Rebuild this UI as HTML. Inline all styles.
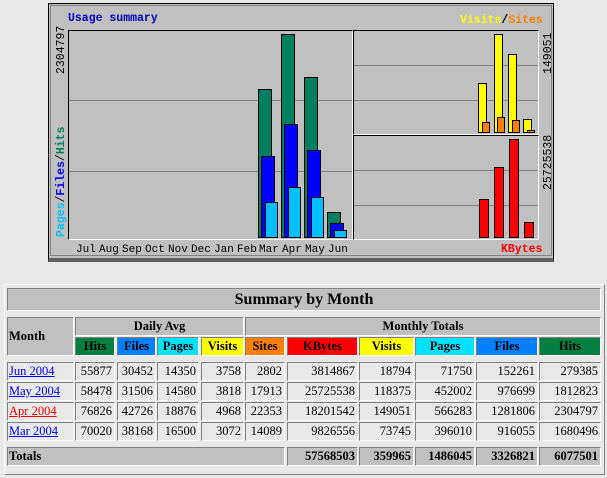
<!DOCTYPE html>
<html><head><meta charset="utf-8"><style>
body{margin:0;width:607px;height:478px;background:#e8e8e8;position:relative;overflow:hidden;font-family:"Liberation Serif",serif}
div{position:absolute;box-sizing:border-box}
.g{font-family:"Liberation Mono",monospace;font-weight:bold;font-size:11.5px;line-height:11px;white-space:nowrap}
.m{font-family:"Liberation Mono",monospace;font-size:11px;line-height:11px;top:245px;color:#000}
.b{border:1px solid #000}
.p{border-top:1px solid #000;border-left:1px solid #000;border-bottom:1px solid #fff;border-right:1px solid #fff;background:#c0c0c0}
.gl{height:1px;background:#808080}
.c{border:1px solid;border-color:#808080 #fff #fff #808080;font-size:12.5px;line-height:16px;text-align:right;padding-right:2px;background:#e8e8e8;white-space:nowrap}
.h{border:1px solid;border-color:#808080 #fff #fff #808080;font-size:12.5px;font-weight:bold;line-height:16px;text-align:center;background:#c0c0c0;white-space:nowrap}
.r{transform:rotate(-90deg);transform-origin:0 0}
a{color:#00f}
</style></head><body>
<div style="left:48px;top:3px;width:506px;height:259px;background:#c0c0c0;border:1px solid #000;border-bottom:4px solid #606060"></div>
<div style="left:50px;top:5px;width:502px;height:251px;border:1px solid #808080"></div>
<div class="g" style="left:68px;top:13px;color:#0000c0">Usage summary</div>
<div class="g" style="left:460px;top:15px;color:#ffff00">Visits<span style="color:#000">/</span><span style="color:#ff8000">Sites</span></div>
<div class="g" style="left:501px;top:244px;color:#ff0000">KBytes</div>
<div class="p" style="left:68px;top:30px;width:285px;height:210px"></div>
<div class="gl" style="left:69px;top:100px;width:283px"></div>
<div class="gl" style="left:69px;top:171px;width:283px"></div>
<div class="g r" style="left:56px;top:74px;font-weight:normal;color:#000">2304797</div>
<div class="g r" style="left:56px;top:237px;font-weight:normal"><span style="color:#00c0ff;font-weight:bold">Pages</span>/<span style="color:#0000ff;font-weight:bold">Files</span>/<span style="color:#008060;font-weight:bold">Hits</span></div>
<div class="m" style="left:76px">Jul</div>
<div class="m" style="left:99px">Aug</div>
<div class="m" style="left:122px">Sep</div>
<div class="m" style="left:145px">Oct</div>
<div class="m" style="left:168px">Nov</div>
<div class="m" style="left:191px">Dec</div>
<div class="m" style="left:214px">Jan</div>
<div class="m" style="left:237px">Feb</div>
<div class="m" style="left:259px">Mar</div>
<div class="m" style="left:282px">Apr</div>
<div class="m" style="left:305px">May</div>
<div class="m" style="left:328px">Jun</div>
<div class="b" style="left:258px;top:89px;width:14px;height:149px;background:#008060"></div>
<div class="b" style="left:261px;top:156px;width:14px;height:82px;background:#0000ff"></div>
<div class="b" style="left:265px;top:202px;width:13px;height:36px;background:#00c0ff"></div>
<div class="b" style="left:281px;top:34px;width:14px;height:204px;background:#008060"></div>
<div class="b" style="left:284px;top:124px;width:14px;height:114px;background:#0000ff"></div>
<div class="b" style="left:288px;top:187px;width:13px;height:51px;background:#00c0ff"></div>
<div class="b" style="left:304px;top:77px;width:14px;height:161px;background:#008060"></div>
<div class="b" style="left:307px;top:150px;width:14px;height:88px;background:#0000ff"></div>
<div class="b" style="left:311px;top:197px;width:13px;height:41px;background:#00c0ff"></div>
<div class="b" style="left:327px;top:212px;width:14px;height:26px;background:#008060"></div>
<div class="b" style="left:330px;top:223px;width:14px;height:15px;background:#0000ff"></div>
<div class="b" style="left:334px;top:230px;width:13px;height:8px;background:#00c0ff"></div>
<div class="p" style="left:353px;top:30px;width:186px;height:105px"></div>
<div class="gl" style="left:354px;top:65px;width:184px"></div>
<div class="gl" style="left:354px;top:100px;width:184px"></div>
<div class="p" style="left:353px;top:135px;width:186px;height:105px"></div>
<div class="gl" style="left:354px;top:170px;width:184px"></div>
<div class="gl" style="left:354px;top:205px;width:184px"></div>
<div class="g r" style="left:543px;top:74px;font-weight:normal">149051</div>
<div class="g r" style="left:543px;top:190px;font-weight:normal">25725538</div>
<div class="b" style="left:478px;top:83px;width:9px;height:50px;background:#ffff00"></div>
<div class="b" style="left:482px;top:122px;width:8px;height:11px;background:#ff8000"></div>
<div class="b" style="left:494px;top:34px;width:9px;height:99px;background:#ffff00"></div>
<div class="b" style="left:497px;top:117px;width:8px;height:16px;background:#ff8000"></div>
<div class="b" style="left:508px;top:54px;width:9px;height:79px;background:#ffff00"></div>
<div class="b" style="left:512px;top:120px;width:8px;height:13px;background:#ff8000"></div>
<div class="b" style="left:523px;top:119px;width:9px;height:14px;background:#ffff00"></div>
<div class="b" style="left:527px;top:130px;width:8px;height:3px;background:#ff8000"></div>
<div class="b" style="left:479px;top:199px;width:10px;height:39px;background:#ff0000"></div>
<div class="b" style="left:494px;top:167px;width:10px;height:71px;background:#ff0000"></div>
<div class="b" style="left:509px;top:139px;width:10px;height:99px;background:#ff0000"></div>
<div class="b" style="left:524px;top:222px;width:10px;height:16px;background:#ff0000"></div>

<div style="left:4px;top:284px;width:601px;height:191px;border:1px solid;border-color:#fff #808080 #808080 #fff"></div>
<div class="h" style="left:7px;top:288px;width:594px;height:23px;font-size:16px;line-height:21px">Summary by Month</div>
<div class="h" style="left:7px;top:317px;width:67px;height:39px;line-height:37px;text-align:left;padding-left:1px">Month</div>
<div class="h" style="left:75px;top:317px;width:169px;height:19px">Daily Avg</div>
<div class="h" style="left:245px;top:317px;width:356px;height:19px">Monthly Totals</div>
<div class="h" style="left:75px;top:337px;width:40px;height:19px;background:#008040">Hits</div>
<div class="h" style="left:117px;top:337px;width:39px;height:19px;background:#0080ff">Files</div>
<div class="h" style="left:157px;top:337px;width:42px;height:19px;background:#00e0ff">Pages</div>
<div class="h" style="left:201px;top:337px;width:43px;height:19px;background:#ffff00">Visits</div>
<div class="h" style="left:245px;top:337px;width:40px;height:19px;background:#ff8000">Sites</div>
<div class="h" style="left:287px;top:337px;width:71px;height:19px;background:#ff0000">KBytes</div>
<div class="h" style="left:359px;top:337px;width:55px;height:19px;background:#ffff00">Visits</div>
<div class="h" style="left:415px;top:337px;width:60px;height:19px;background:#00e0ff">Pages</div>
<div class="h" style="left:476px;top:337px;width:62px;height:19px;background:#0080ff">Files</div>
<div class="h" style="left:539px;top:337px;width:62px;height:19px;background:#008040">Hits</div>

<div class="c" style="left:7px;top:362px;width:67px;height:19px;text-align:left;padding-left:1px"><a href="#">Jun 2004</a></div>
<div class="c" style="left:75px;top:362px;width:40px;height:19px">55877</div>
<div class="c" style="left:117px;top:362px;width:39px;height:19px">30452</div>
<div class="c" style="left:157px;top:362px;width:42px;height:19px">14350</div>
<div class="c" style="left:201px;top:362px;width:43px;height:19px">3758</div>
<div class="c" style="left:245px;top:362px;width:40px;height:19px">2802</div>
<div class="c" style="left:287px;top:362px;width:71px;height:19px">3814867</div>
<div class="c" style="left:359px;top:362px;width:55px;height:19px">18794</div>
<div class="c" style="left:415px;top:362px;width:60px;height:19px">71750</div>
<div class="c" style="left:476px;top:362px;width:62px;height:19px">152261</div>
<div class="c" style="left:539px;top:362px;width:62px;height:19px">279385</div>

<div class="c" style="left:7px;top:382px;width:67px;height:19px;text-align:left;padding-left:1px"><a href="#">May 2004</a></div>
<div class="c" style="left:75px;top:382px;width:40px;height:19px">58478</div>
<div class="c" style="left:117px;top:382px;width:39px;height:19px">31506</div>
<div class="c" style="left:157px;top:382px;width:42px;height:19px">14580</div>
<div class="c" style="left:201px;top:382px;width:43px;height:19px">3818</div>
<div class="c" style="left:245px;top:382px;width:40px;height:19px">17913</div>
<div class="c" style="left:287px;top:382px;width:71px;height:19px">25725538</div>
<div class="c" style="left:359px;top:382px;width:55px;height:19px">118375</div>
<div class="c" style="left:415px;top:382px;width:60px;height:19px">452002</div>
<div class="c" style="left:476px;top:382px;width:62px;height:19px">976699</div>
<div class="c" style="left:539px;top:382px;width:62px;height:19px">1812823</div>

<div class="c" style="left:7px;top:402px;width:67px;height:19px;text-align:left;padding-left:1px"><a href="#" style="color:#f00">Apr 2004</a></div>
<div class="c" style="left:75px;top:402px;width:40px;height:19px">76826</div>
<div class="c" style="left:117px;top:402px;width:39px;height:19px">42726</div>
<div class="c" style="left:157px;top:402px;width:42px;height:19px">18876</div>
<div class="c" style="left:201px;top:402px;width:43px;height:19px">4968</div>
<div class="c" style="left:245px;top:402px;width:40px;height:19px">22353</div>
<div class="c" style="left:287px;top:402px;width:71px;height:19px">18201542</div>
<div class="c" style="left:359px;top:402px;width:55px;height:19px">149051</div>
<div class="c" style="left:415px;top:402px;width:60px;height:19px">566283</div>
<div class="c" style="left:476px;top:402px;width:62px;height:19px">1281806</div>
<div class="c" style="left:539px;top:402px;width:62px;height:19px">2304797</div>

<div class="c" style="left:7px;top:422px;width:67px;height:19px;text-align:left;padding-left:1px"><a href="#">Mar 2004</a></div>
<div class="c" style="left:75px;top:422px;width:40px;height:19px">70020</div>
<div class="c" style="left:117px;top:422px;width:39px;height:19px">38168</div>
<div class="c" style="left:157px;top:422px;width:42px;height:19px">16500</div>
<div class="c" style="left:201px;top:422px;width:43px;height:19px">3072</div>
<div class="c" style="left:245px;top:422px;width:40px;height:19px">14089</div>
<div class="c" style="left:287px;top:422px;width:71px;height:19px">9826556</div>
<div class="c" style="left:359px;top:422px;width:55px;height:19px">73745</div>
<div class="c" style="left:415px;top:422px;width:60px;height:19px">396010</div>
<div class="c" style="left:476px;top:422px;width:62px;height:19px">916055</div>
<div class="c" style="left:539px;top:422px;width:62px;height:19px">1680496</div>

<div class="h" style="left:7px;top:447px;width:278px;height:19px;text-align:left;padding-left:1px">Totals</div>
<div class="h" style="left:287px;top:447px;width:71px;height:19px;text-align:right;padding-right:2px">57568503</div>
<div class="h" style="left:359px;top:447px;width:55px;height:19px;text-align:right;padding-right:2px">359965</div>
<div class="h" style="left:415px;top:447px;width:60px;height:19px;text-align:right;padding-right:2px">1486045</div>
<div class="h" style="left:476px;top:447px;width:62px;height:19px;text-align:right;padding-right:2px">3326821</div>
<div class="h" style="left:539px;top:447px;width:62px;height:19px;text-align:right;padding-right:2px">6077501</div>
</body></html>
